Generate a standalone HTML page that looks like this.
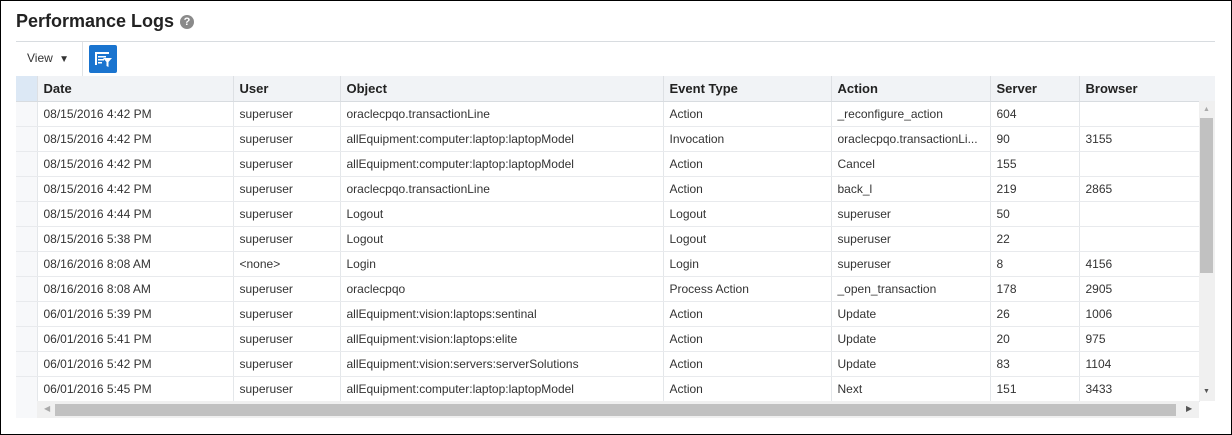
<!DOCTYPE html>
<html><head><style>
*{margin:0;padding:0;box-sizing:border-box}
body{width:1232px;height:435px;background:#fff;font-family:"Liberation Sans",Arial,sans-serif;position:relative;overflow:hidden}
.abs{position:absolute}
.frame{left:0;top:0;width:1232px;height:435px;border:1px solid #000;z-index:5}
.title{left:16px;top:11px;font-size:18px;font-weight:bold;color:#222}
.help{left:180px;top:15px;width:14px;height:14px;border-radius:50%;background:#8a8a8a;color:#fff;font-size:11px;font-weight:bold;text-align:center;line-height:14px}
table{position:absolute;left:16px;top:76px;border-collapse:collapse;table-layout:fixed;font-size:12px;color:#333}
td,th{height:25px;padding:0 6px;white-space:nowrap;overflow:hidden;text-align:left;border-right:1px solid #e4e7ea;border-bottom:1px solid #e8eaed}
th{background:#f1f3f6;font-size:13px;font-weight:bold;color:#222;border-right:1px solid #dde0e4;border-bottom:1px solid #d8dce0}
td.rh{background:#f7f8fa;border-right:1px solid #e4e7ea}
th.rh{background:#dce8f5}
</style></head><body>
<div class="abs frame"></div>
<div class="abs title">Performance Logs</div>
<div class="abs help">?</div>
<div class="abs" style="left:16px;top:41px;width:1199px;height:1px;background:#d8dce0"></div>
<div class="abs" style="left:27px;top:51px;font-size:12px;color:#333">View <span style="font-size:10px;margin-left:3px">▼</span></div>
<div class="abs" style="left:82px;top:42px;width:1px;height:34px;background:#e0e3e6"></div>
<div class="abs" style="left:89px;top:45px;width:28px;height:28px;background:#1a74cf;border-radius:2px">
<svg width="28" height="28" viewBox="0 0 28 28"><g fill="#fff"><rect x="6" y="7" width="14" height="2"/><rect x="6" y="7" width="2" height="13"/><rect x="9" y="11" width="8" height="1.5"/><rect x="9" y="14" width="6" height="1.5"/><rect x="9" y="17" width="4" height="1.5"/><path d="M14 13h9l-3.5 4v5l-2-1v-4z"/></g></svg></div>
<table>
<colgroup><col style="width:21px"><col style="width:196px"><col style="width:107px"><col style="width:323px"><col style="width:168px"><col style="width:159px"><col style="width:89px"><col style="width:120px"></colgroup>
<tr><th class="rh"></th><th>Date</th><th>User</th><th>Object</th><th>Event Type</th><th>Action</th><th>Server</th><th>Browser</th></tr>
<tr><td class="rh"></td><td>08/15/2016 4:42 PM</td><td>superuser</td><td>oraclecpqo.transactionLine</td><td>Action</td><td>_reconfigure_action</td><td>604</td><td></td></tr>
<tr><td class="rh"></td><td>08/15/2016 4:42 PM</td><td>superuser</td><td>allEquipment:computer:laptop:laptopModel</td><td>Invocation</td><td>oraclecpqo.transactionLi...</td><td>90</td><td>3155</td></tr>
<tr><td class="rh"></td><td>08/15/2016 4:42 PM</td><td>superuser</td><td>allEquipment:computer:laptop:laptopModel</td><td>Action</td><td>Cancel</td><td>155</td><td></td></tr>
<tr><td class="rh"></td><td>08/15/2016 4:42 PM</td><td>superuser</td><td>oraclecpqo.transactionLine</td><td>Action</td><td>back_l</td><td>219</td><td>2865</td></tr>
<tr><td class="rh"></td><td>08/15/2016 4:44 PM</td><td>superuser</td><td>Logout</td><td>Logout</td><td>superuser</td><td>50</td><td></td></tr>
<tr><td class="rh"></td><td>08/15/2016 5:38 PM</td><td>superuser</td><td>Logout</td><td>Logout</td><td>superuser</td><td>22</td><td></td></tr>
<tr><td class="rh"></td><td>08/16/2016 8:08 AM</td><td>&lt;none&gt;</td><td>Login</td><td>Login</td><td>superuser</td><td>8</td><td>4156</td></tr>
<tr><td class="rh"></td><td>08/16/2016 8:08 AM</td><td>superuser</td><td>oraclecpqo</td><td>Process Action</td><td>_open_transaction</td><td>178</td><td>2905</td></tr>
<tr><td class="rh"></td><td>06/01/2016 5:39 PM</td><td>superuser</td><td>allEquipment:vision:laptops:sentinal</td><td>Action</td><td>Update</td><td>26</td><td>1006</td></tr>
<tr><td class="rh"></td><td>06/01/2016 5:41 PM</td><td>superuser</td><td>allEquipment:vision:laptops:elite</td><td>Action</td><td>Update</td><td>20</td><td>975</td></tr>
<tr><td class="rh"></td><td>06/01/2016 5:42 PM</td><td>superuser</td><td>allEquipment:vision:servers:serverSolutions</td><td>Action</td><td>Update</td><td>83</td><td>1104</td></tr>
<tr><td class="rh"></td><td>06/01/2016 5:45 PM</td><td>superuser</td><td>allEquipment:computer:laptop:laptopModel</td><td>Action</td><td>Next</td><td>151</td><td>3433</td></tr>
</table>
<div class="abs" style="left:1199px;top:76px;width:16px;height:25px;background:#f1f3f6"></div>
<div class="abs" style="left:1199px;top:101px;width:16px;height:300px;background:#f0f0f0"></div>
<div class="abs" style="left:1200px;top:118px;width:13px;height:155px;background:#c1c1c1"></div>
<div class="abs" style="left:1203px;top:106px;font-size:7px;color:#aaa">▲</div>
<div class="abs" style="left:1203px;top:388px;font-size:7px;color:#555">▼</div>
<div class="abs" style="left:16px;top:401px;width:21px;height:17px;background:#f7f8fa"></div>
<div class="abs" style="left:37px;top:401px;width:1162px;height:17px;background:#f0f0f0"></div>
<div class="abs" style="left:55px;top:404px;width:1121px;height:12px;background:#c1c1c1"></div>
<div class="abs" style="left:44px;top:404px;font-size:8px;color:#aaa">◀</div>
<div class="abs" style="left:1186px;top:404px;font-size:8px;color:#555">▶</div>
</body></html>
